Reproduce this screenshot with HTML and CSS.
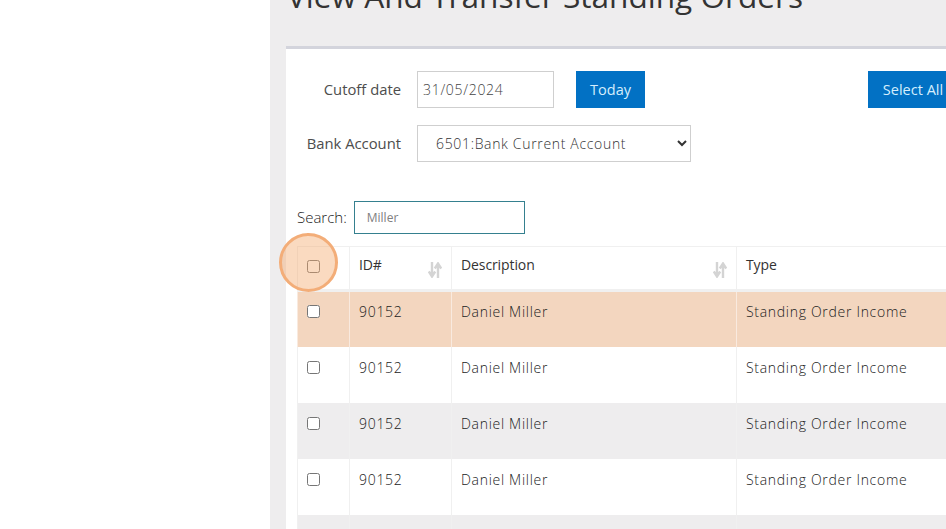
FILE: index.html
```html
<!DOCTYPE html>
<html lang="en">
<head>
<meta charset="utf-8">
<title>View And Transfer Standing Orders</title>
<link rel="stylesheet" href="styles.css">
</head>
<body>
<div class="page">
  <aside class="sidebar"></aside>
  <main class="main">
    <h1 class="title">View And Transfer Standing Orders</h1>
    <section class="card">
      <div class="form-row">
        <label class="form-label">Cutoff date</label>
        <input class="date-input" type="text" value="31/05/2024">
        <button class="btn btn-today">Today</button>
        <button class="btn btn-select">Select All</button>
      </div>
      <div class="form-row form-row-bank">
        <label class="form-label">Bank Account</label>
        <select class="bank-select"><option>6501:Bank Current Account</option></select>
      </div>
      <div class="search-row">
        <label class="search-label">Search:</label>
        <input class="search-input" type="text" value="Miller">
      </div>
      <div class="table-wrap">
        <table class="orders">
          <colgroup>
            <col class="col-check"><col class="col-id"><col class="col-desc"><col class="col-type">
          </colgroup>
          <thead>
            <tr>
              <th><input class="check" type="checkbox"></th>
              <th><span class="th-inner">ID#<svg class="sort" viewBox="0 0 14 16" width="14" height="16"><path d="M4 0v13M.8 9.500 4 14.500l3.200-5M10 16V3M6.800 6.500 10 1.500l3.200 5" fill="none" stroke="#d4d4d4" stroke-width="2.400"/></svg></span></th>
              <th><span class="th-inner">Description<svg class="sort" viewBox="0 0 14 16" width="14" height="16"><path d="M4 0v13M.8 9.500 4 14.500l3.200-5M10 16V3M6.800 6.500 10 1.500l3.200 5" fill="none" stroke="#d4d4d4" stroke-width="2.400"/></svg></span></th>
              <th>Type</th>
            </tr>
          </thead>
          <tbody>
            <tr class="row-active"><td><input class="check" type="checkbox"></td><td>90152</td><td>Daniel Miller</td><td>Standing Order Income</td></tr>
            <tr><td><input class="check" type="checkbox"></td><td>90152</td><td>Daniel Miller</td><td>Standing Order Income</td></tr>
            <tr class="row-alt"><td><input class="check" type="checkbox"></td><td>90152</td><td>Daniel Miller</td><td>Standing Order Income</td></tr>
            <tr><td><input class="check" type="checkbox"></td><td>90152</td><td>Daniel Miller</td><td>Standing Order Income</td></tr>
            <tr class="row-alt"><td><input class="check" type="checkbox"></td><td>90152</td><td>Daniel Miller</td><td>Standing Order Income</td></tr>
          </tbody>
        </table>
        <div class="highlight"></div>
      </div>
    </section>
  </main>
</div>
</body>
</html>
```
FILE: styles.css
```css
html, body {
  margin: 0;
  height: 100%;
  overflow: hidden;
  background: #fff;
  font-family: "Open Sans", sans-serif;
  color: #4a4a4a;
}
.page {
  display: flex;
  width: 946px;
  height: 529px;
  overflow: hidden;
}
.sidebar {
  flex: 0 0 270px;
  background: #fff;
}
.main {
  flex: 1 0 0;
  min-width: 0;
  background: #eeedee;
  padding-left: 16px;
  overflow: hidden;
}
.title {
  margin: -23px 0 0;
  font-size: 31.600px;
  line-height: 38px;
  font-weight: 500;
  color: #333;
  white-space: nowrap;
  height: 69px;
  padding-left: 1px;
}
.card {
  width: 900px;
  height: 600px;
  box-sizing: border-box;
  background: #fff;
  border-top: 3px solid #d3d4dc;
  padding: 22px 0 0 11px;
}
.form-row {
  display: flex;
  align-items: center;
  height: 37px;
}
.form-row-bank {
  margin-top: 17px;
}
.form-label {
  flex: 0 0 104px;
  text-align: right;
  font-size: 14.800px;
  color: #4d4d4d;
  margin-right: 16px;
  padding-bottom: 2px;
}
.date-input {
  box-sizing: border-box;
  width: 137px;
  height: 37px;
  border: 1px solid #cfcfcf;
  padding: 0 5px;
  font: 300 14px "Open Sans", sans-serif;
  color: #444;
  letter-spacing: 0.7px;
  outline: 0;
}
.btn {
  height: 37px;
  border: 0;
  background: #0271c4;
  color: #d5eefd;
  font: 14.500px "Open Sans", sans-serif;
  padding: 0;
}
.btn-today {
  width: 69px;
  margin-left: 22px;
}
.btn-select {
  width: 90px;
  margin-left: 223px;
  flex: none;
}
.bank-select {
  box-sizing: border-box;
  width: 274px;
  height: 37px;
  border: 1px solid #cfcfcf;
  background: #fff;
  padding-left: 14px;
  font: 300 14px "Open Sans", sans-serif;
  color: #333;
  letter-spacing: 0.67px;
}
.search-row {
  display: flex;
  align-items: center;
  margin-top: 39px;
  height: 33px;
}
.search-label {
  font-size: 15px;
  font-weight: 300;
  color: #222;
  margin-right: 7px;
  padding-bottom: 2px;
}
.search-input {
  box-sizing: border-box;
  width: 171px;
  height: 33px;
  border: 1px solid #35808f;
  padding: 0 12px;
  font: 12px "Open Sans", sans-serif;
  color: #808080;
  outline: 0;
}
.table-wrap {
  position: relative;
  margin-top: 12px;
}
.orders {
  border-collapse: collapse;
  table-layout: fixed;
  width: 860px;
  font-size: 14px;
}
.col-check { width: 52px; }
.col-id { width: 102px; }
.col-desc { width: 285px; }
.orders th {
  box-sizing: border-box;
  height: 44px;
  padding: 0 9px 8px;
  text-align: left;
  font-weight: 400;
  font-size: 14px;
  letter-spacing: -0.1px;
  color: #333;
  vertical-align: middle;
  border: 1px solid #f0f0f0;
  border-bottom: 3px solid #f0f0f0;
}
.th-inner {
  display: flex;
  justify-content: space-between;
}
.sort {
  margin-top: 7px;
  margin-bottom: -7px;
  flex: none;
}
.orders td {
  height: 56px;
  padding: 7px 9px 0;
  box-sizing: border-box;
  vertical-align: top;
  font-weight: 300;
  color: #222;
  letter-spacing: 0.7px;
  line-height: 27px;
  border-left: 1px solid #f0f0f0;
  border-right: 1px solid #f0f0f0;
}
.orders th:first-child, .orders td:first-child {
  padding: 0 0 0 9px;
}
.orders th:first-child {
  padding-top: 0;
  padding-bottom: 7px;
}
.orders td:first-child {
  padding-top: 6px;
}
.check {
  width: 13px;
  height: 13px;
  margin: 0;
  vertical-align: middle;
}
.orders .row-active td {
  background: #f3d6bf;
  border-left-color: #f9eadf;
  border-right-color: #f9eadf;
  padding-top: 6px;
}
.orders .row-active td:first-child {
  padding-top: 4px;
}
.row-alt td {
  background: #eeedee;
}
.highlight {
  position: absolute;
  left: -18px;
  top: -13px;
  width: 59px;
  height: 59px;
  box-sizing: border-box;
  border: 3px solid #f3ad78;
  border-radius: 50%;
  background: rgba(243, 166, 105, 0.42);
}
```
